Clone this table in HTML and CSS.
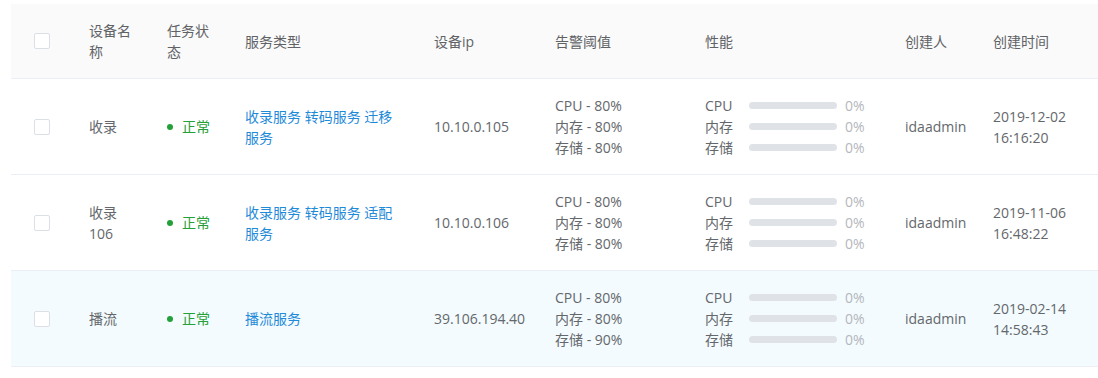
FILE: index.html
```html
<!DOCTYPE html>
<html lang="zh-CN">
<head>
<meta charset="utf-8">
<title>设备列表</title>
<link rel="stylesheet" href="styles.css">
</head>
<body>
<table class="grid">
  <colgroup>
    <col class="w-check"><col class="w-name"><col class="w-status"><col class="w-type"><col class="w-ip"><col class="w-alarm"><col class="w-perf"><col class="w-user"><col class="w-time">
  </colgroup>
  <thead>
    <tr>
      <th class="c-check"><span class="box"></span></th>
      <th class="c-narrow">设备名称</th>
      <th class="c-narrow">任务状态</th>
      <th class="c-type">服务类型</th>
      <th>设备ip</th>
      <th>告警阈值</th>
      <th>性能</th>
      <th>创建人</th>
      <th>创建时间</th>
    </tr>
  </thead>
  <tbody>
    <tr>
      <td class="c-check"><span class="box"></span></td>
      <td class="c-narrow">收录</td>
      <td class="c-narrow"><span class="status"><i class="dot"></i>正常</span></td>
      <td class="c-type"><span class="link">收录服务 转码服务 迁移服务</span></td>
      <td>10.10.0.105</td>
      <td><div>CPU - 80%</div><div>内存 - 80%</div><div>存储 - 80%</div></td>
      <td>
        <div class="perf"><span class="plabel">CPU</span><span class="bar"><span class="fill" style="width:0%"></span></span><span class="pct">0%</span></div>
        <div class="perf"><span class="plabel">内存</span><span class="bar"><span class="fill" style="width:0%"></span></span><span class="pct">0%</span></div>
        <div class="perf"><span class="plabel">存储</span><span class="bar"><span class="fill" style="width:0%"></span></span><span class="pct">0%</span></div>
      </td>
      <td>idaadmin</td>
      <td class="c-time">2019-12-02 16:16:20</td>
    </tr>
    <tr>
      <td class="c-check"><span class="box"></span></td>
      <td class="c-narrow">收录 106</td>
      <td class="c-narrow"><span class="status"><i class="dot"></i>正常</span></td>
      <td class="c-type"><span class="link">收录服务 转码服务 适配服务</span></td>
      <td>10.10.0.106</td>
      <td><div>CPU - 80%</div><div>内存 - 80%</div><div>存储 - 80%</div></td>
      <td>
        <div class="perf"><span class="plabel">CPU</span><span class="bar"><span class="fill" style="width:0%"></span></span><span class="pct">0%</span></div>
        <div class="perf"><span class="plabel">内存</span><span class="bar"><span class="fill" style="width:0%"></span></span><span class="pct">0%</span></div>
        <div class="perf"><span class="plabel">存储</span><span class="bar"><span class="fill" style="width:0%"></span></span><span class="pct">0%</span></div>
      </td>
      <td>idaadmin</td>
      <td class="c-time">2019-11-06 16:48:22</td>
    </tr>
    <tr class="active">
      <td class="c-check"><span class="box"></span></td>
      <td class="c-narrow">播流</td>
      <td class="c-narrow"><span class="status"><i class="dot"></i>正常</span></td>
      <td class="c-type"><span class="link">播流服务</span></td>
      <td>39.106.194.40</td>
      <td><div>CPU - 80%</div><div>内存 - 80%</div><div>存储 - 90%</div></td>
      <td>
        <div class="perf"><span class="plabel">CPU</span><span class="bar"><span class="fill" style="width:0%"></span></span><span class="pct">0%</span></div>
        <div class="perf"><span class="plabel">内存</span><span class="bar"><span class="fill" style="width:0%"></span></span><span class="pct">0%</span></div>
        <div class="perf"><span class="plabel">存储</span><span class="bar"><span class="fill" style="width:0%"></span></span><span class="pct">0%</span></div>
      </td>
      <td>idaadmin</td>
      <td class="c-time">2019-02-14 14:58:43</td>
    </tr>
  </tbody>
</table>
</body>
</html>
```
FILE: styles.css
```css
html, body {
  margin: 0;
  padding: 0;
  background: #ffffff;
}
body {
  padding: 4px 0 0 11px;
  font-family: "Open Sans", "Noto Sans CJK SC", sans-serif;
  font-size: 14px;
  line-height: 21px;
  color: #64676c;
}
.grid {
  border-collapse: collapse;
  table-layout: fixed;
  width: 1087px;
}
.w-check { width: 68px; }
.w-name { width: 78px; }
.w-status { width: 78px; }
.w-type { width: 189px; }
.w-ip { width: 121px; }
.w-alarm { width: 150px; }
.w-perf { width: 200px; }
.w-user { width: 88px; }
.w-time { width: 115px; }

.grid th, .grid td {
  text-align: left;
  vertical-align: middle;
  padding: 16px 10px;
  border-bottom: 1px solid #ebeef5;
  word-break: normal;
}
.grid th {
  background: #fafafa;
  font-weight: normal;
  color: #606266;
  padding-top: 16px;
  padding-bottom: 16px;
}
.grid .c-check {
  padding-left: 23px;
  padding-right: 0;
}
.grid .c-narrow {
  padding-right: 24px;
}
.grid .c-type {
  padding-right: 25px;
}
.grid .c-time {
  padding-right: 30px;
}
.grid tr.active td {
  background: #f3fbfe;
}
.box {
  display: block;
  box-sizing: border-box;
  width: 16px;
  height: 16px;
  border: 1px solid #dcdfe6;
  border-radius: 2px;
  background: #ffffff;
}
.status {
  display: flex;
  align-items: center;
  gap: 9px;
  color: #24a038;
  white-space: nowrap;
}
.dot {
  display: block;
  width: 6px;
  height: 6px;
  border-radius: 50%;
  background: #24a038;
}
.link {
  color: #1f8ad8;
}
.perf {
  display: flex;
  align-items: center;
  height: 21px;
}
.plabel {
  width: 44px;
  flex: none;
}
.bar {
  display: block;
  width: 88px;
  height: 7px;
  border-radius: 4px;
  background: #dfe2e6;
  overflow: hidden;
  flex: none;
}
.fill {
  display: block;
  height: 100%;
  background: #1f8ad8;
}
.pct {
  margin-left: 8px;
  color: #b4b7bc;
}
```
